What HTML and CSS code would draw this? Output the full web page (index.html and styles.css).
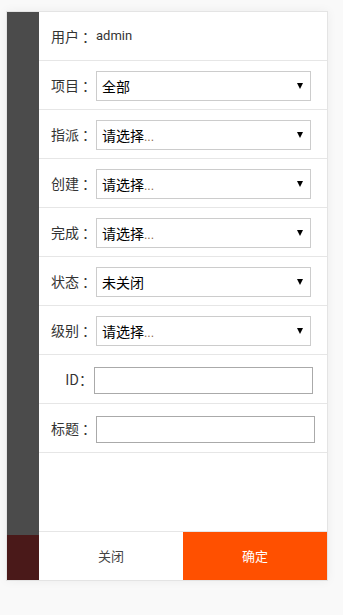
FILE: index.html
```html
<!DOCTYPE html>
<html lang="zh">
<head>
<meta charset="utf-8">
<title>筛选</title>
<link rel="stylesheet" href="styles.css">
</head>
<body>
<div class="card">
  <div class="strip">
    <div class="strip-top"></div>
    <div class="strip-bottom"></div>
  </div>
  <div class="main">
    <div class="form">
      <div class="row">
        <span class="label">用户<span class="colon">：</span></span>
        <span class="value">admin</span>
      </div>
      <div class="row">
        <span class="label">项目<span class="colon">：</span></span>
        <div class="select"><span>全部</span><i class="arrow"></i></div>
      </div>
      <div class="row">
        <span class="label">指派<span class="colon">：</span></span>
        <div class="select"><span>请选择<em>...</em></span><i class="arrow"></i></div>
      </div>
      <div class="row">
        <span class="label">创建<span class="colon">：</span></span>
        <div class="select"><span>请选择<em>...</em></span><i class="arrow"></i></div>
      </div>
      <div class="row">
        <span class="label">完成<span class="colon">：</span></span>
        <div class="select"><span>请选择<em>...</em></span><i class="arrow"></i></div>
      </div>
      <div class="row">
        <span class="label">状态<span class="colon">：</span></span>
        <div class="select"><span>未关闭</span><i class="arrow"></i></div>
      </div>
      <div class="row">
        <span class="label">级别<span class="colon">：</span></span>
        <div class="select"><span>请选择<em>...</em></span><i class="arrow"></i></div>
      </div>
      <div class="row">
        <span class="label label-id">ID：</span>
        <input class="input" type="text">
      </div>
      <div class="row">
        <span class="label">标题<span class="colon">：</span></span>
        <input class="input" type="text">
      </div>
    </div>
    <div class="footer">
      <button class="btn btn-close">关闭</button>
      <button class="btn btn-ok">确定</button>
    </div>
  </div>
</div>
</body>
</html>
```
FILE: styles.css
```css
html, body {
  margin: 0;
  padding: 0;
  background: #f9f9f9;
}
body {
  font-family: "Noto Sans CJK SC", "Noto Sans", sans-serif;
  color: #333;
  padding: 11px 0 0 6px;
  width: 343px;
  height: 615px;
  box-sizing: border-box;
}
.card {
  width: 320px;
  height: 568px;
  border: 1px solid #e4e4e4;
  background: #fff;
  display: flex;
  box-shadow: 0 0 10px rgba(0, 0, 0, 0.05);
}
.strip {
  width: 32px;
  display: flex;
  flex-direction: column;
  flex-shrink: 0;
}
.strip-top {
  flex: 1;
  background: #4b4b4b;
}
.strip-bottom {
  height: 45px;
  background: #4a1919;
}
.main {
  flex: 1;
  display: flex;
  flex-direction: column;
}
.form {
  flex: 1;
}
.row {
  height: 48px;
  border-bottom: 1px solid #e6e6e6;
  display: flex;
  align-items: center;
  padding-left: 12px;
}
.label {
  width: 45px;
  flex-shrink: 0;
  font-size: 14px;
  line-height: 20px;
  color: #333;
  white-space: nowrap;
}
.colon {
  margin-left: 3px;
}
.label-id {
  width: 42px;
  text-align: right;
  padding-right: 1px;
}
.value {
  font-family: Roboto, "Liberation Sans", sans-serif;
  font-size: 13px;
  color: #333;
  margin-top: -2px;
}
.select {
  height: 28px;
  border: 1px solid #cccccc;
  display: flex;
  align-items: center;
  justify-content: space-between;
  padding: 0 7px 0 5px;
  box-sizing: content-box;
  font-size: 14px;
  color: #000;
  margin-top: 2px;
  width: 201px;
}
.select em {
  font-style: normal;
  color: #8a6a50;
  font-family: "Liberation Sans", sans-serif;
  font-size: 12px;
}
.arrow {
  width: 0;
  height: 0;
  border-left: 3.5px solid transparent;
  border-right: 3.5px solid transparent;
  border-top: 6px solid #000;
}
.input {
  width: 219px;
  height: 27px;
  border: 1px solid #aaaaaa;
  box-sizing: border-box;
  margin: 2px 0 0 0;
  padding: 0 4px;
  background: #fff;
  outline: none;
}
.footer {
  height: 48px;
  border-top: 1px solid #e6e6e6;
  display: flex;
}
.btn {
  flex: 1;
  border: none;
  margin: 0;
  padding: 0 0 2px 0;
  font-family: "Noto Sans CJK SC", sans-serif;
  font-size: 13px;
  cursor: pointer;
}
.btn-close {
  background: #fff;
  color: #444;
}
.btn-ok {
  background: #ff5000;
  color: #fff;
}
```
